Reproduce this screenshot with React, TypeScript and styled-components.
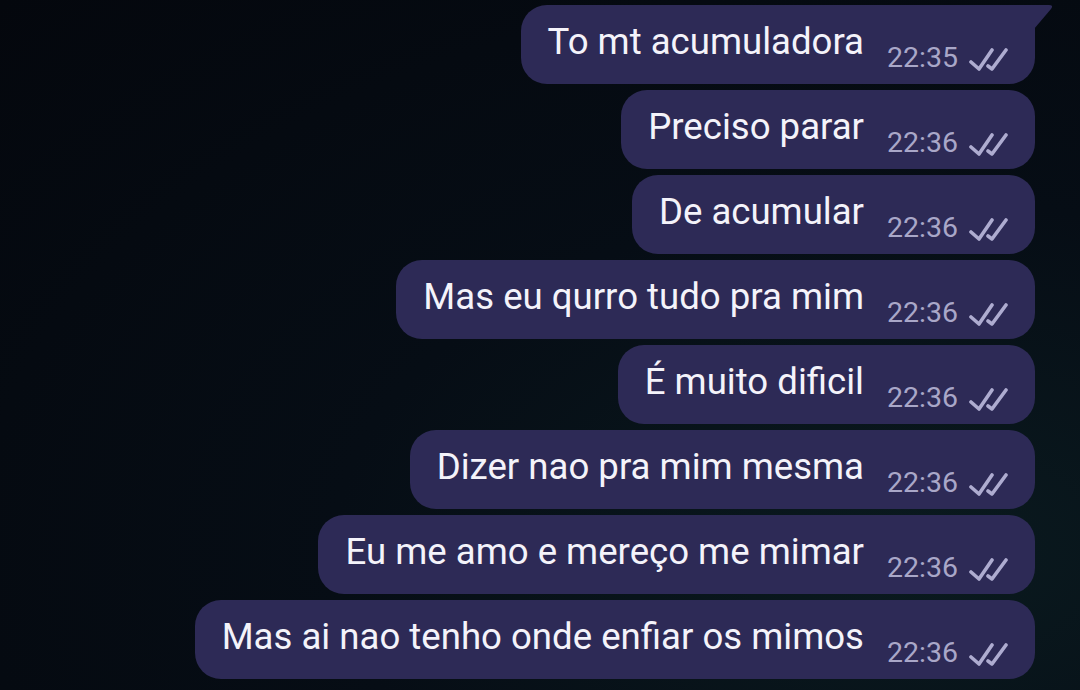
import styled, { createGlobalStyle } from 'styled-components';

const GlobalStyle = createGlobalStyle`
  html, body {
    margin: 0;
    padding: 0;
    background: #04080f;
  }
  * { box-sizing: border-box; }
`;

const messages = [
  { text: 'To mt acumuladora', time: '22:35' },
  { text: 'Preciso parar', time: '22:36' },
  { text: 'De acumular', time: '22:36' },
  { text: 'Mas eu qurro tudo pra mim', time: '22:36' },
  { text: 'É muito dificil', time: '22:36' },
  { text: 'Dizer nao pra mim mesma', time: '22:36' },
  { text: 'Eu me amo e mereço me mimar', time: '22:36' },
  { text: 'Mas ai nao tenho onde enfiar os mimos', time: '22:36' },
];

const Screen = styled.div`
  width: 1080px;
  height: 690px;
  overflow: hidden;
  background: radial-gradient(ellipse at 85% 80%, #0a1a1f 0%, #060d15 45%, #04070d 100%);
  display: flex;
  flex-direction: column;
  align-items: flex-end;
  gap: 6px;
  padding: 5px 45px 0 0;
  font-family: Roboto, 'Noto Sans', 'Liberation Sans', sans-serif;
`;

const Bubble = styled.div<{ $first?: boolean }>`
  position: relative;
  height: 79px;
  display: flex;
  align-items: flex-start;
  padding: 0 27px;
  background: #2d2a56;
  border-radius: 26px;
  ${(p) => (p.$first ? 'border-top-right-radius: 0;' : '')}
`;

const Tail = styled.svg`
  position: absolute;
  top: 0;
  right: -19px;
  width: 20px;
  height: 24px;
`;

const Text = styled.span`
  margin-top: 17px;
  font-size: 36.6px;
  line-height: 40px;
  color: #f4f3fa;
  white-space: nowrap;
`;

const Meta = styled.div`
  display: flex;
  align-items: flex-start;
  margin-left: 23px;
  margin-top: 39px;
  gap: 10px;
`;

const Time = styled.span`
  font-size: 28.5px;
  line-height: 28px;
  color: #a9a7c8;
`;

const Checks = styled.svg`
  width: 40px;
  height: 24px;
  margin-top: 3px;
`;

const DoubleCheck = () => (
  <Checks viewBox="0 0 40 24" fill="none" stroke="#aeacd0" strokeWidth="3.6" strokeLinecap="round" strokeLinejoin="round">
    <path d="M3 15 L11 22 L24 3" />
    <path d="M20 19 L24 22 L38 3" />
  </Checks>
);

export default function App() {
  return (
    <>
      <GlobalStyle />
      <Screen>
        {messages.map((m, i) => (
          <Bubble key={i} $first={i === 0}>
            {i === 0 && (
              <Tail viewBox="0 0 20 24">
                <path d="M0 0 H15 Q20 0 17 4 L0 24 Z" fill="#2d2a56" />
              </Tail>
            )}
            <Text>{m.text}</Text>
            <Meta>
              <Time>{m.time}</Time>
              <DoubleCheck />
            </Meta>
          </Bubble>
        ))}
      </Screen>
    </>
  );
}
